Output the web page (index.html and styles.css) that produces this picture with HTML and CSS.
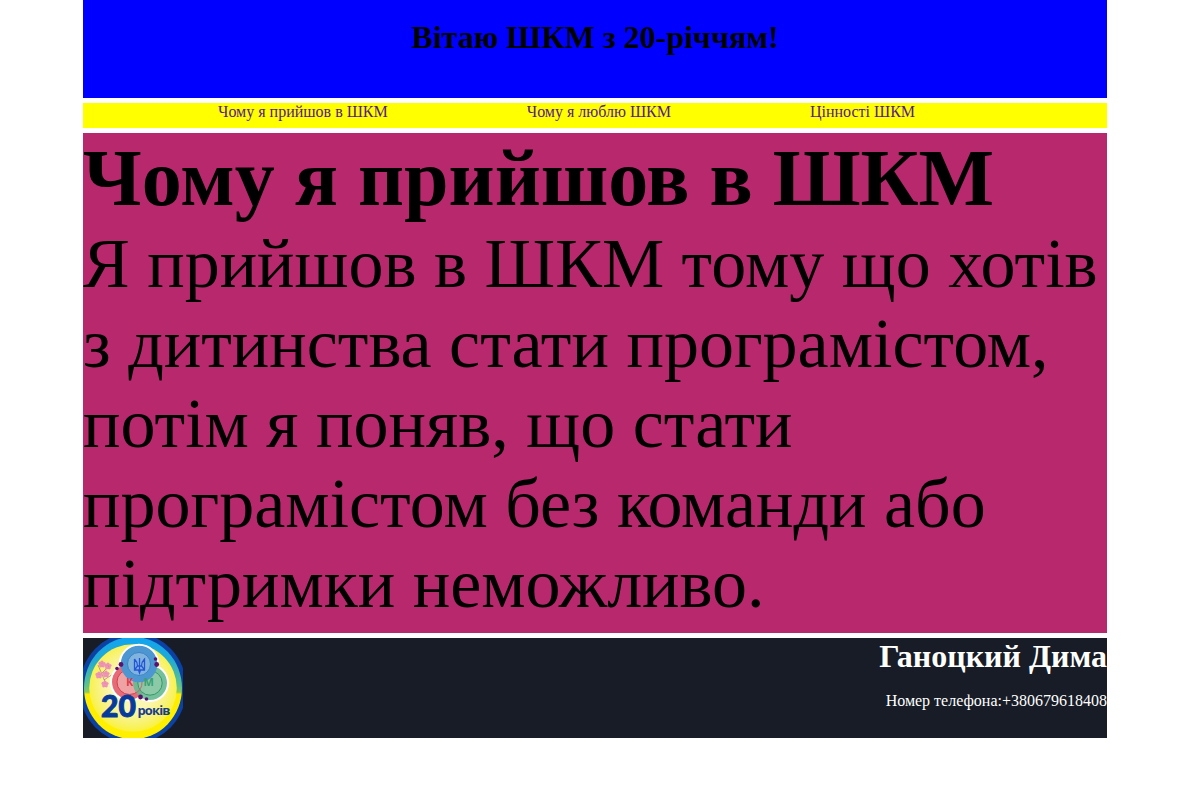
FILE: index.html
```html
<!DOCTYPE html>
<html lang="uk">
<head>
<meta charset="utf-8">
<title>ШКМ</title>
<link rel="stylesheet" href="styles.css">
</head>
<body>
<div class="page">
  <header class="header"><h1>Вітаю ШКМ з 20-річчям!</h1></header>
  <nav class="nav"><a>Чому я прийшов в ШКМ</a><a>Чому я люблю ШКМ</a><a>Цінності ШКМ</a></nav>
  <main class="main">
    <h2>Чому я прийшов в ШКМ</h2>
    <p>Я прийшов в ШКМ тому що хотів з дитинства стати програмістом, потім я поняв, що стати програмістом без команди або підтримки неможливо.</p>
  </main>
  <footer class="footer">
    <svg class="logo" viewBox="0 0 100 100">
      <defs>
        <radialGradient id="sun" cx=".5" cy=".48" r=".52"><stop offset=".5" stop-color="#faf6b4"/><stop offset=".85" stop-color="#f8f26a"/><stop offset="1" stop-color="#fbf23a"/></radialGradient>
        <linearGradient id="rim" x1="0" y1="0" x2="0" y2="1"><stop offset="0" stop-color="#10a5f0"/><stop offset=".22" stop-color="#20a9d4"/><stop offset=".48" stop-color="#5fc38a"/><stop offset=".54" stop-color="#8acb5c"/><stop offset=".56" stop-color="#ffed00"/><stop offset="1" stop-color="#fff000"/></linearGradient>
        <g id="flower"><circle cx="0" cy="-2" r="1.6"/><circle cx="2" cy="-.5" r="1.6"/><circle cx="1.2" cy="1.8" r="1.6"/><circle cx="-1.3" cy="1.8" r="1.6"/><circle cx="-2" cy="-.6" r="1.6"/><circle r=".7" fill="#d9669a"/></g>
      </defs>
      <ellipse cx="50" cy="50" rx="53.5" ry="55.5" fill="#0a41a2"/>
      <ellipse cx="50" cy="50" rx="49" ry="51.2" fill="url(#rim)"/>
      <circle cx="50" cy="50" r="43.8" fill="url(#sun)"/>
      <path d="M15 27q4 9 7 17M18 36l8-8M21 42l9-6" fill="none" stroke="#9b6670" stroke-width=".6"/>
      <g fill="#ef91b8"><use href="#flower" x="19" y="26"/><use href="#flower" x="25" y="28"/><use href="#flower" x="16" y="37"/><use href="#flower" x="23" y="36"/><use href="#flower" x="22" y="46"/></g>
      <g fill="#fff"><circle cx="56" cy="26" r="20.3"/><circle cx="46.5" cy="44" r="19.5"/><circle cx="67" cy="45" r="19"/></g>
      <circle cx="46.5" cy="44" r="17.5" fill="#e66b76"/>
      <circle cx="46.5" cy="44" r="12.5" fill="#efa2a4" stroke="#d43f50"/>
      <circle cx="67" cy="45" r="17" fill="#65b990" fill-opacity=".9"/>
      <circle cx="67" cy="45" r="12.2" fill="#91cba9" fill-opacity=".85" stroke="#36976a"/>
      <path d="M53 33a12.5 12.5 0 0 1 6 11a12.5 12.5 0 0 1-6 11" fill="none" stroke="#d95c69" stroke-width="1"/>
      <circle cx="56" cy="26" r="18.3" fill="#4c96d2"/>
      <circle cx="56" cy="26" r="11.5" fill="#80b4df" stroke="#3c82c5"/>
      <path d="M51.5 21v11h4l1 3l1-3h4v-11q-3 3-3 7l3 4M51.5 32l3-4q0-4-3-7M56.5 20v13M54 28h5" fill="none" stroke="#2455d6" stroke-width="1.3"/>
      <text class="logo-red" x="43" y="47.5">К</text>
      <text class="logo-green" x="60.5" y="47.5">М</text>
      <g fill="#5a126f"><circle cx="38" cy="26.5" r="2.4"/><circle cx="34" cy="30.5" r="1.8"/><circle cx="73.7" cy="26.5" r="2.4"/><circle cx="72.5" cy="21" r="1.8"/><circle cx="57.5" cy="59" r="2.4"/><circle cx="63.5" cy="61" r="1.8"/></g>
      <text class="logo-number" x="18" y="79.2">20</text>
      <text class="logo-years" x="54.5" y="76.5" textLength="33">років</text>
    </svg>
    <div class="contact"><h1>Ганоцкий Дима</h1><p>Номер телефона:+380679618408</p></div>
  </footer>
</div>
</body>
</html>
```
FILE: styles.css
```css
body{margin:0;background:#fff;font-family:"Liberation Serif",serif;font-size:16px}
.page{width:1024px;margin-left:83px;display:grid;grid-template-rows:98px 25px 500px 100px;gap:5px}
h1,h2,p{margin:0}
.header{background:#00f;text-align:center;padding-top:19px}
.header h1{font-size:32px}
.nav{background:#ff0;display:flex;gap:139px;padding-left:135px;color:#551a8b}
.main{background:#b7296c;font-size:70px}
.main h2{font-size:80px;line-height:90px;margin-bottom:1px}
.main p{line-height:80px}
.footer{background:#171c26;color:#fff;display:flex;justify-content:space-between;text-align:right}
.logo{width:100px;height:100px;overflow:hidden}
.logo text{font-family:"Open Sans",sans-serif;font-weight:700;line-height:1}
.logo .logo-red{font-size:11px;fill:#d83c4c}
.logo .logo-green{font-size:11px;fill:#38a074}
.logo .logo-number{font-family:Lato,sans-serif;font-size:30px;font-weight:900;fill:#073b9b;stroke:#073b9b;stroke-width:1px}
.logo .logo-years{font-size:13px;fill:#173d8d}
.contact p{margin-top:17px}
```
